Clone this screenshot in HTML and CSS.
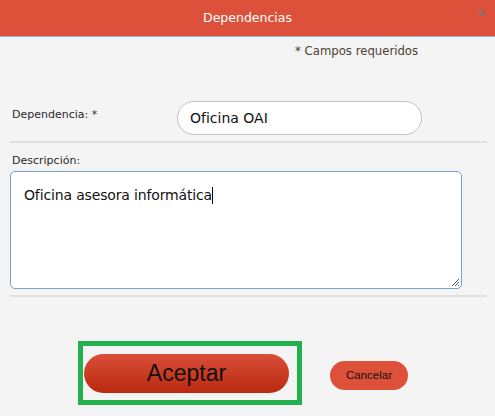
FILE: index.html
```html
<!DOCTYPE html>
<html lang="es">
<head>
<meta charset="utf-8">
<title>Dependencias</title>
<link rel="stylesheet" href="styles.css">
</head>
<body>
<div class="dialog">
  <header class="titlebar">
    <span class="spacer"></span>
    <span class="title">Dependencias</span>
    <span class="close">x</span>
  </header>
  <div class="content">
    <p class="required">* Campos requeridos</p>
    <div class="field-row">
      <label class="label label-inline">Dependencia: *</label>
      <div class="input">Oficina OAI</div>
    </div>
    <div class="rule rule-a"></div>
    <label class="label">Descripción:</label>
    <div class="textarea">
      <span class="ta-text">Oficina asesora informática</span><span class="caret"></span>
      <svg class="grip" width="9" height="9" viewBox="0 0 9 9"><path d="M8 1L1 8M8 4L4 8M8 7L7 8" stroke="#555" stroke-width="1" fill="none"/></svg>
    </div>
    <div class="rule rule-b"></div>
    <div class="actions">
      <div class="highlight">
        <button class="btn-accept">Aceptar</button>
      </div>
      <button class="btn-cancel">Cancelar</button>
    </div>
  </div>
</div>
</body>
</html>
```
FILE: styles.css
```css
* { box-sizing: border-box; }
html, body { margin: 0; padding: 0; }
body {
  width: 495px;
  height: 416px;
  overflow: hidden;
  background: #f4f4f4;
  font-family: "DejaVu Sans", Verdana, sans-serif;
}
.dialog { width: 495px; height: 416px; background: #f4f4f4; }
.titlebar {
  height: 37px;
  background: #dd513a;
  border-bottom: 1px solid #93b4d4;
  display: grid;
  grid-template-columns: 1fr auto 1fr;
  align-items: center;
  color: #fff;
}
.title { font-size: 12.5px; padding-bottom: 2px; }
.close {
  justify-self: end;
  align-self: start;
  margin-top: 7px;
  color: #8a6f7a;
  font-size: 11px;
  font-weight: bold;
  line-height: 12px;
  padding-right: 10px;
}
.content { padding: 0 8px 0 10px; }
.required {
  margin: 7px 0 0 0;
  padding-left: 285px;
  font-size: 11.7px;
  color: #4d4033;
  line-height: 14px;
}
.field-row {
  display: flex;
  align-items: flex-start;
  margin-top: 43px;
}
.label {
  display: block;
  font-size: 11px;
  color: #2a2a2a;
  padding-left: 2px;
  line-height: 14px;
}
.label-inline { width: 167px; padding-top: 7px; }
.input {
  width: 245px;
  height: 34px;
  border: 1px solid #bfc2cc;
  border-radius: 17px;
  background: #fff;
  font-size: 14px;
  color: #111;
  padding: 7px 0 0 12px;
  line-height: 18px;
}
.rule { height: 2px; background: #e0e0e0; }
.rule-a { margin-top: 6px; }
.rule-b { margin-top: 6px; }
.rule-a + .label { margin-top: 11px; }
.textarea {
  position: relative;
  width: 452px;
  height: 118px;
  margin-top: 3px;
  border: 1px solid #7aa0c8;
  border-radius: 5px;
  background: #fff;
  font-size: 14px;
  letter-spacing: -0.15px;
  color: #111;
  padding: 14px 0 0 13px;
  line-height: 18px;
}
.caret {
  display: inline-block;
  width: 1px;
  height: 17px;
  background: #000;
  vertical-align: -4px;
}
.grip { position: absolute; right: 1px; bottom: 1px; }
.actions {
  display: flex;
  align-items: center;
  padding-left: 68px;
  margin-top: 44px;
}
.highlight {
  border: 5px solid #22b14c;
  padding: 8px 8px 7px 1px;
  margin-right: 28px;
}
.btn-accept {
  display: block;
  width: 205px;
  height: 39px;
  border: none;
  border-radius: 20px;
  background: linear-gradient(#da4e38, #b9290f);
  color: #111;
  font-family: "Liberation Sans", Arial, sans-serif;
  font-size: 23px;
  padding: 0;
}
.btn-cancel {
  width: 78px;
  height: 29px;
  margin-top: 4px;
  border: none;
  border-radius: 15px;
  background: #dd513a;
  color: #111;
  font-family: "Liberation Sans", Arial, sans-serif;
  font-size: 11.5px;
  padding: 0;
}
```
